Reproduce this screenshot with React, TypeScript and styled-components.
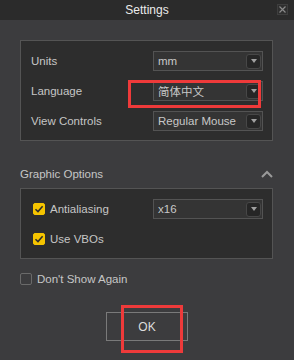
import React from 'react';
import styled, { createGlobalStyle } from 'styled-components';

const GlobalStyle = createGlobalStyle`
    html, body {
        margin: 0;
        padding: 0;
        background: #3c3c3e;
    }
    * {
        box-sizing: border-box;
    }
`

const Window = styled.div`
    position: relative;
    width: 294px;
    height: 360px;
    background: #3c3c3e;
    font-family: "Liberation Sans", "Noto Sans CJK SC", sans-serif;
    font-size: 11.5px;
    color: #c4c4c4;
    overflow: hidden;
`

const TitleBar = styled.div`
    position: relative;
    height: 20px;
    background: #2b2b2b;
    display: flex;
    align-items: center;
    justify-content: center;
    color: #ececec;
    font-size: 12px;
`

const CloseButton = styled.div`
    position: absolute;
    right: 6px;
    top: 4px;
    width: 11px;
    height: 11px;
    border: 1px solid #3e3e3e;
    background: #2f2f2f;
    display: flex;
    align-items: center;
    justify-content: center;
`

const Body = styled.div`
    padding: 20px 21px 0 20px;
    display: flex;
    flex-direction: column;
`

const Panel = styled.div`
    background: #2d2d2d;
    border: 1px solid #545454;
    padding: 10px 9px 9px 10px;
    display: flex;
    flex-direction: column;
    gap: 10px;
`

const Row = styled.div`
    height: 20px;
    display: flex;
    align-items: center;
    justify-content: space-between;
`

const Label = styled.span`
    color: #c6c6c6;
`

const Select = styled.div`
    width: 110px;
    height: 20px;
    border: 1px solid #535353;
    background: #343434;
    display: flex;
    align-items: center;
    justify-content: space-between;
    padding: 0 1px 0 4px;
    color: #c8c8c8;
    font-size: 11.5px;
    white-space: nowrap;
`

const ArrowBox = styled.div`
    flex: none;
    width: 15px;
    height: 15px;
    border-radius: 3px;
    border: 1px solid #474747;
    background: #262626;
    display: flex;
    align-items: center;
    justify-content: center;

    &::after {
        content: "";
        border-left: 3px solid transparent;
        border-right: 3px solid transparent;
        border-top: 4px solid #a0a0a0;
    }
`

const SectionHeader = styled.div`
    margin-top: 23px;
    margin-bottom: 4px;
    height: 20px;
    display: flex;
    align-items: center;
    justify-content: space-between;
`

const CheckRow = styled.label<{ $indent?: number }>`
    display: flex;
    align-items: center;
    gap: 5px;
    padding-left: ${p => p.$indent ?? 0}px;
`

const Box = styled.span<{ $checked?: boolean }>`
    width: 12px;
    height: 12px;
    border-radius: 2px;
    display: flex;
    align-items: center;
    justify-content: center;
    background: ${p => (p.$checked ? '#f5c400' : 'transparent')};
    border: 1px solid ${p => (p.$checked ? '#f5c400' : '#6a6a6a')};
`

const Footer = styled.div`
    margin-top: 10px;
    height: 20px;
    display: flex;
    align-items: center;
`

const ButtonRow = styled.div`
    margin-top: 23px;
    display: flex;
    justify-content: center;
    padding-left: 1px;
`

const OkButton = styled.button`
    width: 82px;
    height: 29px;
    background: #3c3c3e;
    border: 1px solid #7a7a7a;
    color: #dcdcdc;
    font-family: inherit;
    font-size: 12px;
`

const Highlight = styled.div`
    position: absolute;
    border: 3px solid #ee3a3a;
    pointer-events: none;
`

const Check = () => (
    <svg width="10" height="10" viewBox="0 0 10 10">
        <path d="M1.5 5.2 L4 7.6 L8.6 2.2" fill="none" stroke="#2a2a2a" strokeWidth="1.5" />
    </svg>
)

const Dropdown: React.FC<{ value: string }> = ({ value }) => (
    <Select>
        <span>{value}</span>
        <ArrowBox />
    </Select>
)

export default function App() {
    return (
        <Window>
            <GlobalStyle />
            <TitleBar>
                Settings
                <CloseButton>
                    <svg width="7" height="7" viewBox="0 0 7 7">
                        <path d="M0.5 0.5 L6.5 6.5 M6.5 0.5 L0.5 6.5" stroke="#8a8a8a" strokeWidth="1.2" />
                    </svg>
                </CloseButton>
            </TitleBar>
            <Body>
                <Panel>
                    <Row>
                        <Label>Units</Label>
                        <Dropdown value="mm" />
                    </Row>
                    <Row>
                        <Label>Language</Label>
                        <Dropdown value="简体中文" />
                    </Row>
                    <Row>
                        <Label>View Controls</Label>
                        <Dropdown value="Regular Mouse" />
                    </Row>
                </Panel>

                <SectionHeader>
                    <Label>Graphic Options</Label>
                    <svg width="12" height="8" viewBox="0 0 12 8">
                        <path d="M1 7 L6 2 L11 7" fill="none" stroke="#9a9a9a" strokeWidth="2" />
                    </svg>
                </SectionHeader>
                <Panel>
                    <Row>
                        <CheckRow $indent={2}>
                            <Box $checked><Check /></Box>
                            <Label>Antialiasing</Label>
                        </CheckRow>
                        <Dropdown value="x16" />
                    </Row>
                    <Row>
                        <CheckRow $indent={2}>
                            <Box $checked><Check /></Box>
                            <Label>Use VBOs</Label>
                        </CheckRow>
                    </Row>
                </Panel>

                <Footer>
                    <CheckRow>
                        <Box />
                        <Label>Don't Show Again</Label>
                    </CheckRow>
                </Footer>

                <ButtonRow>
                    <OkButton>OK</OkButton>
                </ButtonRow>
            </Body>
            <Highlight style={{ left: 128, top: 80, width: 133, height: 28 }} />
            <Highlight style={{ left: 121, top: 305, width: 62, height: 48 }} />
        </Window>
    );
}
